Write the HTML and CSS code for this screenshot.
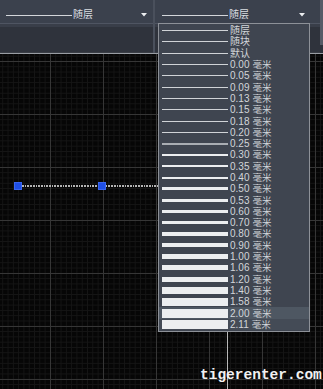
FILE: index.html
```html
<!DOCTYPE html>
<html lang="zh">
<head>
<meta charset="utf-8">
<link rel="stylesheet" href="styles.css">
</head>
<body>
<div class="screen">
  <header class="header">
    <div class="col col-a">
      <div class="combo combo-a">
        <span class="sample"></span><span class="label">随层</span>
        <svg class="arrow" width="6" height="4" viewBox="0 0 6 4"><path d="M0 0H6L3 3.5Z" fill="#eceef0"/></svg>
      </div>
      <div class="subbar"></div>
    </div>
    <div class="sep"></div>
    <div class="col col-b">
      <div class="combo combo-b">
        <span class="sample"></span><span class="label">随层</span>
        <svg class="arrow" width="6" height="4" viewBox="0 0 6 4"><path d="M0 0H6L3 3.5Z" fill="#eceef0"/></svg>
      </div>
      <div class="subbar"></div>
    </div>
    <div class="sep sep-end"></div>
  </header>
  <div class="edge"></div>
  <main class="canvas">
    <div class="crosshair"></div>
    <div class="selline">
      <span class="grip g1"></span>
      <span class="grip g2"></span>
    </div>
    <div class="watermark">tigerenter.com</div>
  </main>

  <ul class="dropdown">
    <li><span class="bar w1"></span><span class="txt">随层</span></li>
    <li><span class="bar w1"></span><span class="txt">随块</span></li>
    <li><span class="bar w1"></span><span class="txt">默认</span></li>
    <li><span class="bar w1"></span><span class="txt">0.00<span class="unit">毫米</span></span></li>
    <li><span class="bar w1"></span><span class="txt">0.05<span class="unit">毫米</span></span></li>
    <li><span class="bar w1"></span><span class="txt">0.09<span class="unit">毫米</span></span></li>
    <li><span class="bar w1"></span><span class="txt">0.13<span class="unit">毫米</span></span></li>
    <li><span class="bar w1"></span><span class="txt">0.15<span class="unit">毫米</span></span></li>
    <li><span class="bar w1"></span><span class="txt">0.18<span class="unit">毫米</span></span></li>
    <li><span class="bar w1"></span><span class="txt">0.20<span class="unit">毫米</span></span></li>
    <li><span class="bar w2 grey"></span><span class="txt">0.25<span class="unit">毫米</span></span></li>
    <li><span class="bar w2"></span><span class="txt">0.30<span class="unit">毫米</span></span></li>
    <li><span class="bar w2"></span><span class="txt">0.35<span class="unit">毫米</span></span></li>
    <li><span class="bar w2"></span><span class="txt">0.40<span class="unit">毫米</span></span></li>
    <li><span class="bar w3"></span><span class="txt">0.50<span class="unit">毫米</span></span></li>
    <li><span class="bar w3"></span><span class="txt">0.53<span class="unit">毫米</span></span></li>
    <li><span class="bar w3"></span><span class="txt">0.60<span class="unit">毫米</span></span></li>
    <li><span class="bar w3"></span><span class="txt">0.70<span class="unit">毫米</span></span></li>
    <li><span class="bar w4"></span><span class="txt">0.80<span class="unit">毫米</span></span></li>
    <li><span class="bar w4"></span><span class="txt">0.90<span class="unit">毫米</span></span></li>
    <li><span class="bar w5"></span><span class="txt">1.00<span class="unit">毫米</span></span></li>
    <li><span class="bar w5"></span><span class="txt">1.06<span class="unit">毫米</span></span></li>
    <li><span class="bar w5"></span><span class="txt">1.20<span class="unit">毫米</span></span></li>
    <li><span class="bar w7"></span><span class="txt">1.40<span class="unit">毫米</span></span></li>
    <li><span class="bar w8"></span><span class="txt">1.58<span class="unit">毫米</span></span></li>
    <li class="hl"><span class="bar w9"></span><span class="txt">2.00<span class="unit">毫米</span></span></li>
    <li class="hl2"><span class="bar w9"></span><span class="txt">2.11<span class="unit">毫米</span></span></li>
  </ul>
</div>
</body>
</html>
```

FILE: styles.css
```css
* { box-sizing: border-box; }
html, body {
  margin: 0;
  padding: 0;
  background: #050505;
  overflow: hidden;
}
body {
  font-family: "Liberation Sans", "Noto Sans CJK SC", sans-serif;
  font-size: 10px;
  color: #d3d6da;
}
.screen {
  position: relative;
  width: 323px;
  height: 389px;
  display: flex;
  flex-direction: column;
}

/* header */
.header {
  display: flex;
  height: 53px;
  background: #2e323b;
}
.col {
  display: flex;
  flex-direction: column;
}
.col-a { width: 154px; }
.col-b { width: 166px; }
.combo {
  height: 24px;
  display: flex;
  align-items: center;
  padding-top: 7px;
  background: #3b414d;
  border-bottom: 1px solid #4f5562;
}
.combo-a { padding-left: 6px; padding-right: 6px; }
.combo-b { padding-left: 7px; padding-right: 15px; }
.sample {
  width: 66px;
  height: 1px;
  background: #d3d6da;
}
.label {
  margin-left: 1px;
  line-height: 12px;
  color: #dcdfe3;
}
.arrow {
  margin-left: auto;
  display: block;
}
.subbar {
  flex: 1;
  background: #2f333c;
  border-top: 3px solid #393e49;
  border-bottom: 1px solid #3a3e46;
}
.sep {
  width: 2px;
  background: #4a505c;
}
.sep-end {
  width: 3px;
  background: #565b66;
  margin-bottom: 8px;
}
.edge {
  height: 1px;
  background: #9a9ea4;
}

/* drawing canvas */
.canvas {
  position: relative;
  flex: 1;
  background-color: #060606;
  background-image:
    linear-gradient(to right, #363636 0 1px, transparent 1px),
    linear-gradient(to bottom, #363636 0 1px, transparent 1px),
    linear-gradient(to right, #151515 0 1px, transparent 1px),
    linear-gradient(to bottom, #151515 0 1px, transparent 1px);
  background-size: 53px 100%, 100% 53px, 5.3px 100%, 100% 5.3px;
  background-position: 50px 0, 0 7px, 2.3px 0, 0 1.7px;
}
.crosshair {
  position: absolute;
  left: 227px;
  top: 0;
  bottom: 0;
  width: 1px;
  background: #b8b8b8;
}
.selline {
  position: absolute;
  left: 14px;
  top: 128px;
  width: 160px;
  height: 8px;
  background-image: repeating-linear-gradient(to right, #b4b4b4 0 1.6px, transparent 1.6px 2.7px);
  background-size: 100% 2px;
  background-position: 0 3px;
  background-repeat: no-repeat;
}
.grip {
  position: absolute;
  top: 0;
  width: 8px;
  height: 8px;
  background: #1f4fe6;
  border: 1px solid #3a66f0;
}
.g1 { left: 0; }
.g2 { left: 84px; }
.watermark {
  position: absolute;
  left: 200px;
  top: 314px;
  font-family: "Liberation Mono", monospace;
  font-weight: bold;
  font-size: 14.5px;
  line-height: 15px;
  color: #f2f2f2;
  white-space: nowrap;
}

/* dropdown list */
.dropdown {
  position: absolute;
  left: 158px;
  top: 23px;
  width: 152px;
  margin: 0;
  padding: 1px 0;
  list-style: none;
  background: #3f4550;
  border: 1px solid #8d9198;
}
.dropdown li {
  height: 11.3px;
  display: flex;
  align-items: center;
  padding-left: 3px;
}
.dropdown li.hl { background: #4e5762; }
.dropdown li.hl2 { background: #444b56; }
.bar {
  width: 66px;
  background: #eceef0;
  flex: none;
}
.bar.grey { background: #a9adb3; }
.w1 { height: 1px; background: #d0d3d7; }
.w2 { height: 2px; }
.w3 { height: 3px; }
.w4 { height: 4px; }
.w5 { height: 5px; }
.w7 { height: 7px; }
.w8 { height: 8px; }
.w9 { height: 9px; }
.txt {
  margin-left: 2px;
  line-height: 11px;
  white-space: nowrap;
}
.unit {
  margin-left: 3px;
  font-size: 9.5px;
}
```
